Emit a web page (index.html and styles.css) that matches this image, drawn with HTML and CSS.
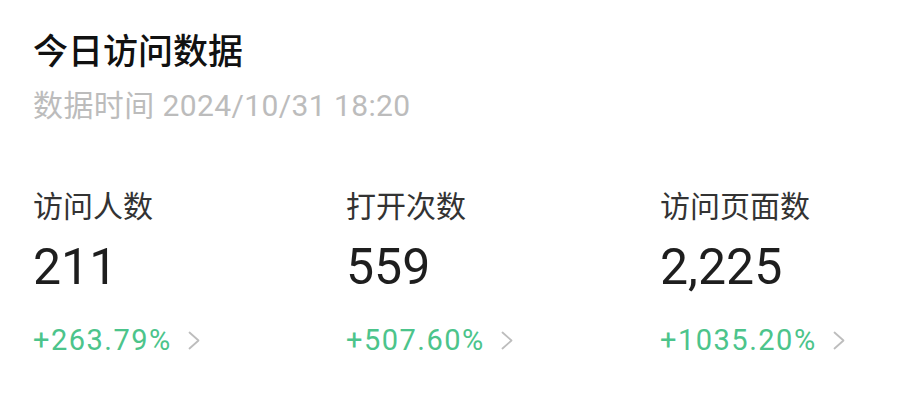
FILE: index.html
```html
<!DOCTYPE html>
<html lang="zh-CN">
<head>
<meta charset="utf-8">
<link rel="stylesheet" href="styles.css">
</head>
<body>
<div class="card">
  <div class="title">今日访问数据</div>
  <div class="sub">数据时间 2024/10/31 18:20</div>
  <div class="stats">
    <div class="stat">
      <div class="label">访问人数</div>
      <div class="num">211</div>
      <div class="pct"><span>+263.79%</span><svg class="chev" viewBox="0 0 12 19" width="12" height="19"><polyline points="1.5,1.5 10.5,9.5 1.5,17.5" fill="none" stroke="#bdbdbd" stroke-width="1.8" stroke-linecap="round" stroke-linejoin="round"/></svg></div>
    </div>
    <div class="stat">
      <div class="label">打开次数</div>
      <div class="num">559</div>
      <div class="pct"><span>+507.60%</span><svg class="chev" viewBox="0 0 12 19" width="12" height="19"><polyline points="1.5,1.5 10.5,9.5 1.5,17.5" fill="none" stroke="#bdbdbd" stroke-width="1.8" stroke-linecap="round" stroke-linejoin="round"/></svg></div>
    </div>
    <div class="stat">
      <div class="label">访问页面数</div>
      <div class="num">2,225</div>
      <div class="pct"><span>+1035.20%</span><svg class="chev" viewBox="0 0 12 19" width="12" height="19"><polyline points="1.5,1.5 10.5,9.5 1.5,17.5" fill="none" stroke="#bdbdbd" stroke-width="1.8" stroke-linecap="round" stroke-linejoin="round"/></svg></div>
    </div>
  </div>
</div>
</body>
</html>
```
FILE: styles.css
```css
html, body {
  margin: 0;
  padding: 0;
  background: #ffffff;
}
body {
  font-family: Roboto, "Noto Sans CJK SC", sans-serif;
  width: 912px;
  height: 400px;
  overflow: hidden;
}
.card {
  padding: 27px 0 0 33px;
}
.title {
  font-family: "Noto Sans CJK SC", sans-serif;
  font-size: 35px;
  font-weight: 500;
  color: #111111;
  line-height: 44px;
}
.sub {
  font-size: 30px;
  color: #bcbcbc;
  line-height: 40px;
  margin-top: 15px;
  letter-spacing: 0.4px;
}
.stats {
  display: grid;
  grid-template-columns: 313px 314px 280px;
  margin-top: 62px;
}
.label {
  font-size: 30px;
  color: #333333;
  line-height: 38px;
}
.num {
  font-size: 50px;
  color: #1e1e1e;
  line-height: 60px;
  margin-top: 11px;
}
.pct {
  display: flex;
  align-items: center;
  font-size: 29px;
  color: #4cc48b;
  letter-spacing: 1.5px;
  line-height: 40px;
  margin-top: 23px;
}
.chev {
  margin-left: 16px;
}
```
